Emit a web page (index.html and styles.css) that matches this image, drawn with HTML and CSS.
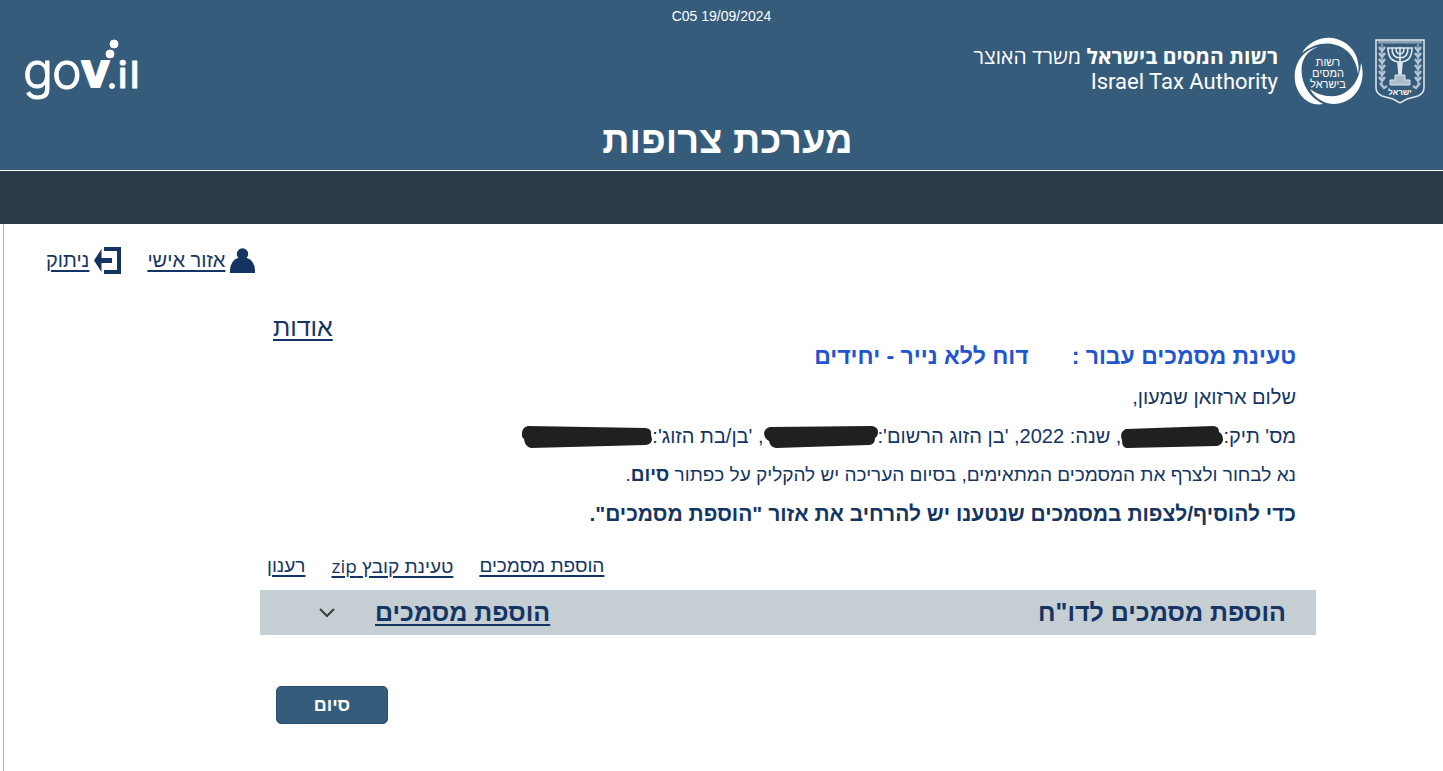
FILE: index.html
```html
<!DOCTYPE html>
<html lang="he" dir="rtl">
<head>
<meta charset="utf-8">
<title>מערכת צרופות</title>
<link rel="stylesheet" href="styles.css">
</head>
<body>
<header class="header">
  <p class="version" dir="ltr">C05 19/09/2024</p>
  <div class="brands">
    <div class="authority">
      <svg class="emblem" viewBox="0 0 50 66" width="50" height="66" fill="none" stroke="#dfe6ec" aria-hidden="true">
        <path d="M1 2h48v48q0 5-6 8l-11 3-7 4-7-4-11-3q-6-3-6-8z" stroke-width="1.500"/>
        <path d="M3 4h44" stroke-width="3" opacity=".5"/>
        <g stroke-width="1.600">
          <path d="M25 9v18M13 10q0 14 12 14t12-14M17 10q0 10 8 10t8-10M21 10q0 6 4 6t4-6M12 10h26"/>
          <path d="M23 25h4l-1 11h-2z" fill="#dfe6ec"/>
        </g>
        <path d="M20 37h10v5h5v5H15v-5h5z" fill="#dfe6ec" fill-opacity=".7"/>
        <g stroke-width="2.400" opacity=".75">
          <path d="M7 6v40M43 6v40" stroke-width="1.200"/>
          <path d="M4 9l3 4 3-4M4 15l3 4 3-4M4 21l3 4 3-4M4 27l3 4 3-4M4 33l3 4 3-4M4 39l3 4 3-4M5 45l4 5 3-2"/>
          <path d="M40 9l3 4 3-4M40 15l3 4 3-4M40 21l3 4 3-4M40 27l3 4 3-4M40 33l3 4 3-4M40 39l3 4 3-4M45 45l-4 5-3-2"/>
        </g>
        <text class="emblem-text" x="25" y="57" text-anchor="middle">ישראל</text>
      </svg>
      <svg class="seal" viewBox="0 0 70 70" width="70" height="70" fill="#fff" aria-hidden="true">
        <path d="M8 17C15 5 30-1 43 3c16 5 24 20 21 35-1-9-5-20-15-26C37 5 22 6 8 17z"/>
        <path d="M67 27c5 16-2 33-17 39-13 5-27 0-34-13 8 6 19 9 30 6 11-4 20-15 21-32z"/>
        <path d="M24 11C10 16 6 28 8 40c2 12 9 22 21 28C16 71 3 60 1 45 -1 29 8 14 24 11z"/>
        <g class="seal-text" text-anchor="middle">
          <text x="34" y="30">רשות</text>
          <text x="34" y="41">המסים</text>
          <text x="34" y="52">בישראל</text>
        </g>
      </svg>
      <div class="authority-name">
        <div><strong>רשות המסים בישראל</strong> משרד האוצר</div>
        <div class="english" dir="ltr">Israel Tax Authority</div>
      </div>
    </div>
    <svg class="gov" viewBox="0 0 116 66" width="116" height="66" fill="#fff" stroke="#fff" role="img" aria-label="gov.il">
      <g class="gov-text">
        <text class="thin" x="-1" y="52">g</text>
        <text class="thin" x="28" y="52">o</text>
        <text class="bold" x="57" y="51">v</text>
        <text class="small" x="94" y="52">i</text>
        <text class="small" x="106" y="52">l</text>
      </g>
      <circle cx="86" cy="18" r="4"/>
      <circle cx="90" cy="8" r="4"/>
      <circle cx="88" cy="50" r="2.500"/>
    </svg>
  </div>
  <h1 class="title">מערכת צרופות</h1>
</header>
<div class="strip"></div>
<main class="page">
  <nav class="user-nav">
    <a href="#"><svg width="25" height="25" viewBox="0 0 25 25" fill="#143564" aria-hidden="true"><circle cx="12.500" cy="6" r="5.700"/><path d="M0 25v-3Q1 12 8 10h9q7 2 8 12v3z"/></svg><span>אזור אישי</span></a>
    <a href="#"><svg width="27" height="27" viewBox="0 0 27 27" fill="#143564" aria-hidden="true"><path d="M10 0h17v27H10v-4h13V4H10z"/><path d="M0 13.500L7.500 2v9H18v5H7.500v9z"/></svg><span>ניתוק</span></a>
  </nav>
  <div class="content">
    <div class="about"><a href="#">אודות</a></div>
    <h2 class="heading"><span>טעינת מסמכים עבור :</span><span>דוח ללא נייר - יחידים</span></h2>
    <p>שלום ארזואן שמעון,</p>
    <p>מס' תיק:<svg class="mark" width="102" height="22" viewBox="0 0 102 22" aria-hidden="true"><path d="M5 3L92 0q6 0 6 6 4 2 4 8-1 5-6 6L6 22q-5 0-5-8-3-8 4-11z"/></svg>, שנה: 2022, 'בן הזוג הרשום':<svg class="mark" width="114" height="22" viewBox="0 0 114 22" aria-hidden="true"><path d="M6 1l102-1q6 1 6 6 0 4-3 6 0 7-6 7L12 22q-6-1-7-7-5-3-5-8 1-5 6-6z"/></svg>, 'בן/בת הזוג':<svg class="mark" width="130" height="22" viewBox="0 0 130 22" aria-hidden="true"><path d="M6 0l118 2q6 1 5 7l1 4q0 5-6 6L9 22q-6-1-7-9-3-2-2-7 1-5 6-6z"/></svg></p>
    <p class="note">נא לבחור ולצרף את המסמכים המתאימים, בסיום העריכה יש להקליק על כפתור <strong>סיום</strong>.</p>
    <p class="hint">כדי להוסיף/לצפות במסמכים שנטענו יש להרחיב את אזור "הוספת מסמכים".</p>
  </div>
  <nav class="actions">
    <a href="#">הוספת מסמכים</a>
    <a href="#">טעינת קובץ <span class="latin">zip</span></a>
    <a href="#">רענון</a>
  </nav>
  <section class="panel">
    <h3>הוספת מסמכים לדו"ח</h3>
    <a href="#">הוספת מסמכים</a>
    <button class="toggle" type="button" aria-label="הרחבה"><svg width="16" height="10" viewBox="0 0 16 10" fill="none" stroke="#3c3c3c" stroke-width="2" aria-hidden="true"><path d="M1 1l7 7 7-7"/></svg></button>
  </section>
  <button class="finish" type="button">סיום</button>
</main>
</body>
</html>
```

FILE: styles.css
```css
* { box-sizing: border-box; }

body {
  margin: 0;
  min-height: 100vh;
  display: flex;
  flex-direction: column;
  background: #fff;
  color: #143564;
  font: 20px/24px "Liberation Sans", Arial, sans-serif;
}

h1, h2, h3, p { margin: 0; }
a { color: inherit; text-underline-offset: 3px; text-decoration-thickness: 2px; }
svg { flex: none; direction: ltr; }

.header {
  background: #365c7c;
  color: #fff;
  border-bottom: 1px solid #fff;
}
.version { padding-top: 8px; font-size: 14px; line-height: 16px; text-align: center; }

.brands { display: flex; justify-content: space-between; padding: 12px 18px 0 24px; }
.authority { display: flex; align-items: center; gap: 11px; }
.authority-name { padding: 0 5px 4px 0; font-family: "Open Sans", sans-serif; font-size: 21px; line-height: 26px; }
.english { font-family: Roboto, sans-serif; font-size: 22px; text-align: right; }
.emblem-text { font: 700 8px "Liberation Sans", sans-serif; fill: #fff; stroke: none; direction: rtl; }
.seal-text { font: 400 11px "Liberation Sans", sans-serif; direction: rtl; }
.gov { overflow: visible; }
.gov-text { font-family: Inter, sans-serif; stroke-linejoin: round; }
.thin { font-size: 50px; font-weight: 300; stroke-width: 1px; }
.bold { font-size: 48px; font-weight: 700; stroke-width: 2px; }
.small { font-size: 37px; font-weight: 500; }

.title {
  padding: 8px 0 4px 12px;
  font-size: 38px;
  line-height: 52px;
  text-align: center;
}
.strip { height: 53px; background: #2a3b47; }

.page {
  flex: 1;
  margin-left: 3px;
  padding: 22px 127px 48px 256px;
  border-left: 1px solid #b4b4b4;
}
.user-nav {
  display: flex;
  justify-content: flex-end;
  gap: 26px;
  margin-left: -214px;
}
.user-nav a { display: flex; align-items: center; gap: 5px; line-height: 28px; }

.content { padding: 0 20px 0 13px; }
.content p { margin-top: 15px; }
.content .note { font-size: 19px; }
.content .hint { font-size: 21px; font-weight: 700; }
.about { padding-top: 38px; font-size: 25px; line-height: 30px; text-align: left; }
.heading { display: flex; gap: 43px; font-size: 23px; line-height: 28px; color: #1f55d0; }
.mark { fill: #202020; vertical-align: -5px; }

.actions {
  display: flex;
  justify-content: flex-end;
  gap: 26px;
  padding: 28px 0 11px 7px;
  font-size: 19px;
}
.latin { font-family: "Open Sans", sans-serif; }
.panel {
  display: flex;
  align-items: center;
  padding: 0 30px 0 59px;
  background: #c4ced3;
  font-size: 25px;
  font-weight: 700;
  line-height: 45px;
}
.panel h3 { flex: 1; font-size: 25px; }
.toggle { display: flex; padding: 0; margin-right: 40px; border: 0; background: none; }

.finish {
  display: block;
  width: 112px;
  height: 38px;
  margin: 51px auto 0 16px;
  padding: 0;
  border: 1px solid #2a4e70;
  border-radius: 5px;
  background: #365c7c;
  color: #fff;
  font: 700 18px "Liberation Sans", sans-serif;
}
```
